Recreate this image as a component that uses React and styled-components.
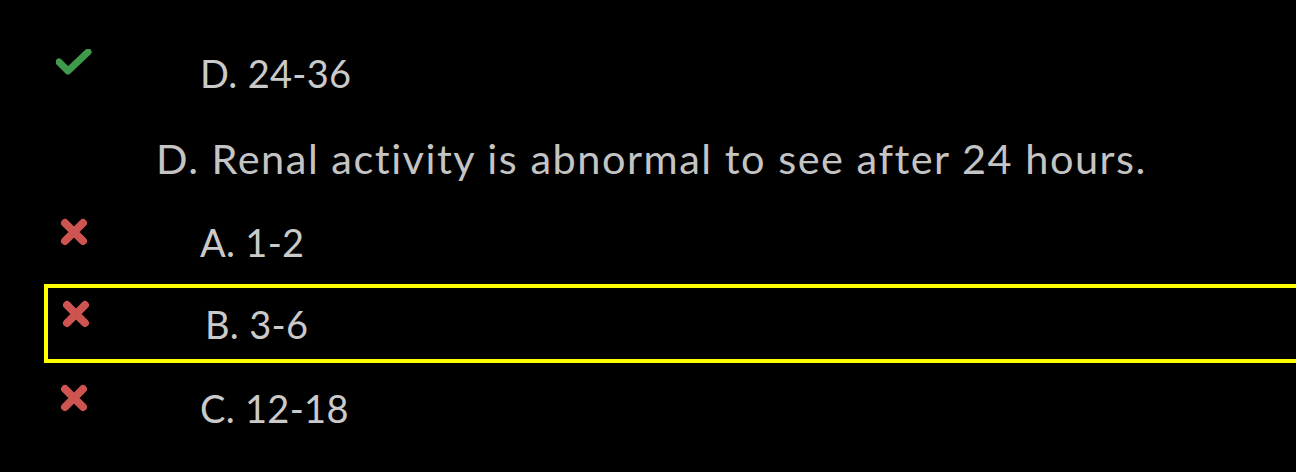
import React from 'react';
import styled, { createGlobalStyle } from 'styled-components';

const GlobalStyle = createGlobalStyle`
  html, body {
    margin: 0;
    padding: 0;
    background: #000;
    overflow: hidden;
  }
  body {
    font-family: Lato, "Liberation Sans", sans-serif;
  }
`;

const Page = styled.div`
  width: 1296px;
  height: 472px;
  background: #000;
  padding-top: 31px;
  box-sizing: border-box;
  overflow: hidden;
`;

const Row = styled.div`
  display: flex;
  align-items: center;
  box-sizing: border-box;
  height: 83px;
  padding-left: 56px;
  ${props => props.selected && `
    height: 79px;
    margin: 1px -40px 3px 44px;
    border: 4px solid #ffff00;
    padding-left: 10px;
  `}
`;

const IconCell = styled.div`
  width: 36px;
  height: 30px;
  margin-bottom: 20px;
  display: flex;
  align-items: center;
  justify-content: center;
  flex-shrink: 0;
`;

const OptionText = styled.span`
  margin-left: ${props => props.selected ? '111px' : '108px'};
  font-size: 38px;
  letter-spacing: 0.3px;
  color: #cacaca;
  line-height: 1;
  white-space: nowrap;
`;

const Question = styled.div`
  height: 86px;
  box-sizing: border-box;
  padding: 2px 0 0 156px;
  display: flex;
  align-items: center;
  font-size: 41.5px;
  letter-spacing: 1.5px;
  color: #c4c4c4;
  white-space: nowrap;
`;

const CheckIcon = () => (
  <svg width="36" height="28" viewBox="0 0 36 28">
    <path d="M3 13 L12 22 L32 3" fill="none" stroke="#3f9a4b" strokeWidth="7" strokeLinecap="round" strokeLinejoin="round" />
  </svg>
);

const CrossIcon = () => (
  <svg width="30" height="30" viewBox="0 0 30 30">
    <path d="M6 6 L24 24 M24 6 L6 24" fill="none" stroke="#cd5450" strokeWidth="8" strokeLinecap="round" />
  </svg>
);

const Option = ({ correct, label, selected }) => (
  <Row selected={selected}>
    <IconCell>{correct ? <CheckIcon /> : <CrossIcon />}</IconCell>
    <OptionText selected={selected}>{label}</OptionText>
  </Row>
);

export default function App() {
  return (
    <Page>
      <GlobalStyle />
      <Option correct label="D. 24-36" />
      <Question>D. Renal activity is abnormal to see after 24 hours.</Question>
      <Option label="A. 1-2" />
      <Option label="B. 3-6" selected />
      <Option label="C. 12-18" />
    </Page>
  );
}
